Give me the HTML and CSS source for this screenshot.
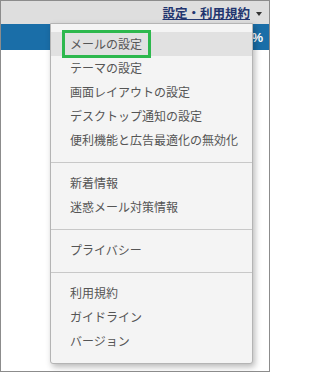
FILE: index.html
```html
<!DOCTYPE html>
<html lang="ja">
<head>
<meta charset="utf-8">
<title>設定・利用規約</title>
<link rel="stylesheet" href="styles.css">
</head>
<body>
<div class="frame">
  <header class="topbar">
    <a class="settings-link" href="#">設定・利用規約</a>
    <span class="caret"></span>
  </header>
  <div class="bluebar"><span class="pct">%</span></div>
  <div class="content"></div>

  <nav class="menu">
    <ul class="group">
      <li class="item active"><span class="label">メールの設定</span><span class="mark"></span></li>
      <li class="item">テーマの設定</li>
      <li class="item">画面レイアウトの設定</li>
      <li class="item">デスクトップ通知の設定</li>
      <li class="item">便利機能と広告最適化の無効化</li>
    </ul>
    <ul class="group">
      <li class="item">新着情報</li>
      <li class="item">迷惑メール対策情報</li>
    </ul>
    <ul class="group">
      <li class="item">プライバシー</li>
    </ul>
    <ul class="group">
      <li class="item">利用規約</li>
      <li class="item">ガイドライン</li>
      <li class="item">バージョン</li>
    </ul>
  </nav>
</div>
</body>
</html>
```

FILE: styles.css
```css
html, body {
  margin: 0;
  padding: 0;
  background: #ffffff;
}

.frame {
  position: relative;
  width: 270px;
  height: 372px;
  box-sizing: border-box;
  border: 1px solid #8c8c8c;
  display: flex;
  flex-direction: column;
  font-family: "Noto Sans CJK JP", "Noto Sans", sans-serif;
  overflow: hidden;
}

.topbar {
  height: 23px;
  background: #dedede;
  display: flex;
  align-items: center;
  justify-content: flex-end;
  padding-right: 7px;
  gap: 6px;
}

.settings-link {
  font-size: 12.5px;
  font-weight: bold;
  color: #22356f;
  text-decoration: underline;
  line-height: 16px;
  letter-spacing: 0;
}

.caret {
  width: 0;
  height: 0;
  border-left: 3.5px solid transparent;
  border-right: 3.5px solid transparent;
  border-top: 4px solid #333333;
  margin-top: 2px;
}

.bluebar {
  height: 26px;
  background: #1a6ea8;
  display: flex;
  align-items: center;
  justify-content: flex-end;
  padding-right: 6px;
}

.pct {
  color: #ffffff;
  font-family: "Liberation Sans", sans-serif;
  font-weight: bold;
  font-size: 13px;
}

.content {
  flex: 1;
  background: #ffffff;
}

.menu {
  position: absolute;
  left: 49px;
  top: 22px;
  width: 201px;
  background: #f4f4f4;
  border: 1px solid #b4b4b4;
  border-radius: 0 0 3px 3px;
  box-shadow: 2px 3px 6px rgba(0, 0, 0, 0.28);
}

.group {
  list-style: none;
  margin: 0;
  padding: 8px 0 10px;
}

.group + .group {
  border-top: 1px solid #c8c8c8;
}

.item {
  position: relative;
  height: 24px;
  line-height: 24px;
  padding-left: 19px;
  font-size: 12px;
  color: #555555;
  white-space: nowrap;
}

.item.active {
  background: #e1e1e1;
}

.mark {
  position: absolute;
  left: 11px;
  top: -2px;
  width: 89px;
  height: 28px;
  box-sizing: border-box;
  border: 3px solid #2db84d;
}
```
